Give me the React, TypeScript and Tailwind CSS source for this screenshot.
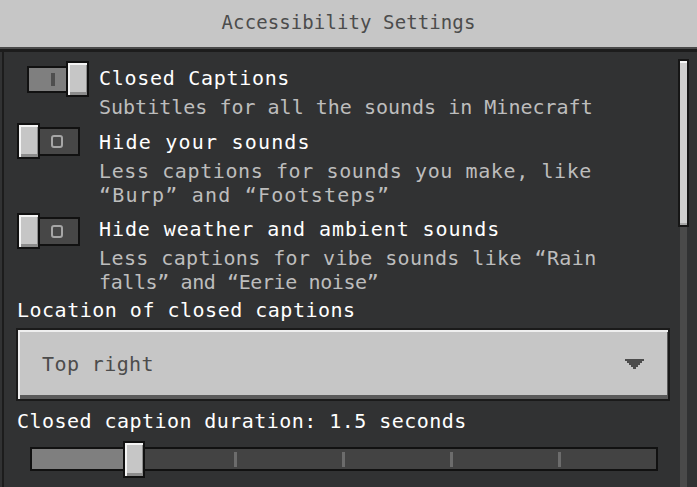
import React from "react";

const FONT = "font-['DejaVu_Sans_Mono','Liberation_Mono',monospace]";

function Knob({ tall }: { tall?: boolean }) {
  return (
    <div
      className={
        (tall ? "h-[37px] w-[22px] " : "h-[36px] w-[23px] ") +
        "relative z-10 shrink-0 border-2 border-[#111111] bg-[#c6c6c6] shadow-[inset_2px_2px_0_0_#f4f4f4,inset_-1px_-3px_0_0_#8c8c8c]"
      }
    />
  );
}

function ToggleOn() {
  return (
    <div className="flex items-center ml-[10px]">
      <div className="w-[41px] h-[27px] -mr-[2px] border-2 border-[#111111] bg-[#7f7f7f] flex items-center pl-[22px]">
        <div className="w-[4px] h-[13px] bg-[#4f4f4f]" />
      </div>
      <Knob />
    </div>
  );
}

function ToggleOff() {
  return (
    <div className="flex items-center">
      <Knob />
      <div className="w-[42px] h-[29px] -ml-[2px] border-2 border-[#111111] bg-[#474747] flex items-center pl-[11px]">
        <div className="w-[12px] h-[13px] border-2 border-[#a6a6a6] rounded-[3px]" />
      </div>
    </div>
  );
}

type Line = { t: string; c: string };

function Row({
  toggle,
  title,
  lines,
  rowClass,
  toggleClass,
  titleClass,
}: {
  toggle: React.ReactNode;
  title: string;
  lines: Line[];
  rowClass: string;
  toggleClass: string;
  titleClass: string;
}) {
  return (
    <div className={"flex " + rowClass}>
      <div className={"w-[82px] shrink-0 " + toggleClass}>{toggle}</div>
      <div className="flex flex-col">
        <div className={"h-[28px] leading-[28px] text-white whitespace-nowrap " + titleClass}>{title}</div>
        <div className="mt-[3px] flex flex-col text-[#bdbdbd]">
          {lines.map((l, i) => (
            <div key={i} className={"leading-[24px] whitespace-nowrap " + l.c}>
              {l.t}
            </div>
          ))}
        </div>
      </div>
    </div>
  );
}

export default function App() {
  return (
    <div className={"w-[697px] h-[487px] overflow-hidden bg-[#313233] flex flex-col text-[20px] " + FONT}>
      <div className="h-[47px] shrink-0 bg-[#c6c6c6] flex items-center justify-center pb-[2px] text-[19px] text-[#4c4c4c] tracking-[0.1px]">
        Accessibility Settings
      </div>
      <div className="h-[2px] shrink-0 bg-[#4a4a4a]" />
      <div className="h-[3px] shrink-0 bg-[#1c1c1c]" />
      <div className="flex-1 flex min-h-0">
        <div className="flex-1 ml-[2px] border-l-2 border-[#1c1c1c] pl-[13px] pt-[12px] flex flex-col">
          <Row
            toggle={<ToggleOn />}
            title="Closed Captions"
            lines={[{ t: "Subtitles for all the sounds in Minecraft", c: "tracking-[0px]" }]}
            rowClass=""
            toggleClass="-mt-[3px]"
            titleClass="tracking-[0.7px]"
          />
          <Row
            toggle={<ToggleOff />}
            title="Hide your sounds"
            lines={[
              { t: "Less captions for sounds you make, like", c: "tracking-[0.6px]" },
              { t: "“Burp” and “Footsteps”", c: "tracking-[1.2px]" },
            ]}
            rowClass="mt-[9px]"
            toggleClass="-mt-[5px]"
            titleClass="tracking-[1.2px]"
          />
          <Row
            toggle={<ToggleOff />}
            title="Hide weather and ambient sounds"
            lines={[
              { t: "Less captions for vibe sounds like “Rain", c: "tracking-[0.4px]" },
              { t: "falls” and “Eerie noise”", c: "tracking-[-0.4px]" },
            ]}
            rowClass="mt-[8px]"
            toggleClass="-mt-[2px]"
            titleClass="tracking-[0.9px]"
          />
          <div className="mt-[2px] leading-[28px] text-white whitespace-nowrap tracking-[0.5px]">
            Location of closed captions
          </div>
          <div className="mt-[4px] -ml-[1px] w-[654px] h-[73px] shrink-0 border-2 border-[#1a1a1a] bg-[#c6c6c6] shadow-[inset_2px_2px_0_0_#efefef,inset_-1px_-4px_0_0_#5a5a5a] flex items-center justify-between pl-[24px] pr-[24px] pb-[1px]">
            <span className="text-[#4c4c4c] tracking-[0.4px]">Top right</span>
            <svg width="19" height="10" viewBox="0 0 19 10" shapeRendering="crispEdges">
              <polygon points="0,0 19,0 19,2 17,2 17,4 15,4 15,6 13,6 13,8 11,8 11,10 8,10 8,8 6,8 6,6 4,6 4,4 2,4 2,2 0,2" fill="#4c4c4c" />
            </svg>
          </div>
          <div className="mt-[6px] leading-[28px] text-white whitespace-nowrap tracking-[0.45px]">
            Closed caption duration: 1.5 seconds
          </div>
          <div className="mt-[6px] h-[37px] relative shrink-0">
            <div className="ml-[13px] mt-[6px] w-[628px] h-[24px] border-2 border-[#111111] bg-[#434343] flex relative">
              <div className="w-[91px] h-full bg-[#7f7f7f]" />
              <div className="absolute top-[3px] left-[202px] w-[3px] h-[15px] bg-[#6c6c6c]" />
              <div className="absolute top-[3px] left-[310px] w-[3px] h-[15px] bg-[#6c6c6c]" />
              <div className="absolute top-[3px] left-[418px] w-[3px] h-[15px] bg-[#6c6c6c]" />
              <div className="absolute top-[3px] left-[526px] w-[3px] h-[15px] bg-[#6c6c6c]" />
            </div>
            <div className="absolute top-0 left-[106px]">
              <Knob tall />
            </div>
          </div>
        </div>
        <div className="w-[13px] shrink-0 flex flex-col items-center pt-[7px]">
          <div className="w-[11px] h-[168px] shrink-0 border-2 border-[#161616] bg-[#cfcfcf] shadow-[inset_0_2px_0_0_#f6f6f6,inset_0_-2px_0_0_#a8a8a8]" />
          <div className="flex-1 w-[7px] bg-[#4a4a4a]" />
        </div>
        <div className="w-[7px] shrink-0" />
      </div>
    </div>
  );
}
